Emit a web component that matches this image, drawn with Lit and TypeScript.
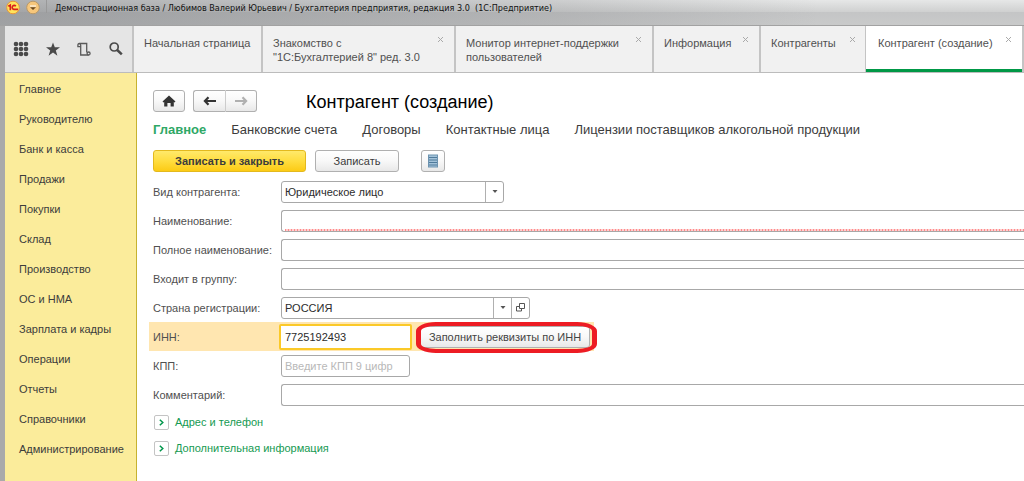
import { LitElement, html, css, svg } from "lit";
import { customElement } from "lit/decorators.js";
import { classMap } from "lit/directives/class-map.js";

const MENU = [
  "Главное", "Руководителю", "Банк и касса", "Продажи", "Покупки", "Склад",
  "Производство", "ОС и НМА", "Зарплата и кадры", "Операции", "Отчеты",
  "Справочники", "Администрирование",
];

const TABS = [
  { text: "Начальная страница", close: false, active: false },
  { text: "Знакомство с\n\"1С:Бухгалтерией 8\" ред. 3.0", close: true, active: false },
  { text: "Монитор интернет-поддержки\nпользователей", close: true, active: false },
  { text: "Информация", close: true, active: false },
  { text: "Контрагенты", close: true, active: false },
  { text: "Контрагент (создание)", close: true, active: true },
];

const SECTIONS = [
  "Главное", "Банковские счета", "Договоры", "Контактные лица",
  "Лицензии поставщиков алкогольной продукции",
];

const gridIcon = html`<svg width="16" height="16" viewBox="0 0 16 16" fill="#4a4a4a">
  ${[3, 8, 13].map((y) => [3, 8, 13].map((x) => svg`<circle cx=${x} cy=${y} r="2.3"/>`))}
</svg>`;
const starIcon = html`<svg width="16" height="16" viewBox="0 0 16 16"><path fill="#4a4a4a" d="M8 1.500l1.800 4.800h5.200l-4.200 3.200 1.600 5.200L8 11.600l-4.400 3.100 1.600-5.200L1 6.300h5.200z"/></svg>`;
const scrollIcon = html`<svg width="16" height="16" viewBox="0 0 16 16" fill="none" stroke="#5a5a5a" stroke-width="1.300"><path d="M4.700 5.700H1.900V4Q1.900 2.500 3.300 2.500H10.700V11.500M3.300 2.500Q4.700 2.700 4.700 4.200V14H12.600M4.700 14L4.700 12"/><circle cx="12.600" cy="12.500" r="1.500"/></svg>`;
const searchIcon = html`<svg width="16" height="16" viewBox="0 0 16 16" fill="none" stroke="#4a4a4a"><circle cx="6.200" cy="6" r="4" stroke-width="1.700"/><path d="M9.200 9L13.800 13.400" stroke-width="2.500"/></svg>`;
const homeIcon = html`<svg width="14" height="12" viewBox="0 0 14 12"><path fill="#333" d="M7 .5L13.500 6.500 12.500 7.500 11.800 6.900V11.500H8.600V8H5.400V11.500H2.200V6.900L1.500 7.500.5 6.500z"/></svg>`;
const arrow = (color: string, back: boolean) => html`<svg width="14" height="10" viewBox="0 0 14 10"><path fill="none" stroke=${color} stroke-width="2.200" d=${back ? "M13 5H2.500M5.500 1.200L1.900 5l3.600 3.800" : "M1 5h10.500M8.500 1.200l3.600 3.800-3.600 3.800"}/></svg>`;
const listIcon = html`<svg width="10" height="14" viewBox="0 0 10 14"><rect x=".5" y="1" width="9" height="12" fill="#a3c2d9" stroke="#6d93b0"/><path d="M1 3.500h8M1 6h8M1 8.500h8M1 11h8" stroke="#4f7a9a"/></svg>`;
const caret = html`<svg width="6" height="4" viewBox="0 0 6 4"><path fill="#555" d="M.5 0h5L3 3z"/></svg>`;
const openIcon = html`<svg width="9" height="9" viewBox="0 0 9 9" fill="none" stroke="#555"><path d="M3.500 .5h5v5h-5zM3 3.500H.5v4.500h5V6"/></svg>`;
const chevron = html`<svg width="5" height="7" viewBox="0 0 5 7"><path fill="none" stroke="#00964b" stroke-width="1.500" d="M.8 .8L3.800 3.500.8 6.200"/></svg>`;

@customElement("app-root")
export class AppRoot extends LitElement {
  static styles = css`
    :host {
      display: flex;
      flex-direction: column;
      min-height: 100vh;
      box-sizing: border-box;
      overflow: hidden;
      background: #fff;
      color: #3c3c3c;
      font: 11px/14px "Liberation Sans", Arial, sans-serif;
    }
    *, *::before, *::after { box-sizing: border-box; }
    svg { display: block; flex: none; }
    button, input, select { font: inherit; color: inherit; margin: 0; padding: 0; }
    a { color: inherit; text-decoration: none; }

    .titlebar {
      display: flex;
      align-items: flex-start;
      height: 26px;
      padding-left: 6px;
      background:
        linear-gradient(90deg, rgba(110, 112, 116, 0.45), rgba(110, 112, 116, 0.2) 55%, rgba(110, 112, 116, 0) 80%),
        linear-gradient(#e6e7e7, #cfd0d0 12px, #c4c5c6 12px, #c9caca);
      border-bottom: 1px solid #a2a2a2;
    }
    .title { padding: 1px 0 0 8px; font-family: "DejaVu Sans Condensed", "Liberation Sans", sans-serif; font-size: 9px; color: #111; white-space: pre; }
    .round { border: 0; background: none; width: 14px; height: 15px; margin-right: 6px; }
    .sep { width: 1px; height: 13px; background: #999; }

    .frame { display: flex; flex-direction: column; flex: 1; border-left: 5px solid #aaa; }
    .top { display: flex; height: 47px; border-bottom: 1px solid #bcbcbc; background: #f1f1f1; }
    .tools { display: flex; align-items: center; justify-content: space-between; width: 127px; padding: 0 8px; background: #e5e5e5; }
    .tool { display: grid; place-items: center; width: 16px; height: 24px; border: 0; background: none; }
    .tabs {
      display: grid;
      grid-template-columns: 129fr 193fr 198fr 107fr 107fr 156fr;
      flex: 1;
      min-width: 0;
      border-right: 2px solid #c4c4c4;
    }
    .tab {
      display: flex;
      min-width: 0;
      border-left: 2px solid #c4c4c4;
      padding: 10px 10px 0 10px;
      color: #505050;
    }
    .tab.active { background: #fff; border-bottom: 3px solid #009846; border-left: 0; padding-left: 12px; box-shadow: -1px 0 #c4c4c4; }
    .tab-text { flex: 1; border: 0; background: none; padding: 0; text-align: left; align-self: flex-start; white-space: pre; }
    .close { border: 0; background: none; width: 7px; height: 7px; }

    .body { display: flex; flex: 1; }
    .menu { width: 132px; flex: none; background: #fbec9b; border-right: 1px solid #c6b230; padding-top: 1px; }
    .menu a { display: flex; align-items: center; height: 30px; padding-left: 14px; white-space: nowrap; }

    main { flex: 1; min-width: 0; padding: 17px 0 0 12px; }
    .head { display: flex; align-items: center; height: 22px; padding-left: 4px; }
    h1 { font-size: 18px; line-height: 22px; font-weight: 400; color: #000; margin: 2px 0 0 49px; }
    .btn {
      display: inline-flex;
      align-items: center;
      justify-content: center;
      height: 22px;
      border: 1px solid #b0b0b0;
      border-radius: 3px;
      background: linear-gradient(#fff, #f8f8f8 50%, #e8e8e8);
    }
    .home { width: 32px; margin-right: 8px; }
    .back { width: 33px; border-radius: 3px 0 0 3px; border-right-color: #ccc; }
    .forward { width: 31px; border-radius: 0 3px 3px 0; border-left: 0; }
    .sections { display: flex; gap: 25px; padding: 9px 0 0 4px; font-size: 13px; line-height: 18px; white-space: nowrap; }
    .sections .current { color: #2fa866; font-weight: 700; }
    .commands { display: flex; padding: 11px 0 5px 4px; }
    .save { width: 153px; margin-right: 9px; font-weight: 700; border-color: #e3b91e; background: linear-gradient(#ffe96b, #ffdd3f 50%, #fccb15); }
    .write { width: 84px; margin-right: 22px; }
    .list { width: 24px; }

    .row { display: flex; align-items: center; height: 29px; padding-left: 4px; color: #505050; }
    .row label { width: 128px; flex: none; }
    .row.hot { width: 445px; background: #ffe6b0; }
    .field { height: 22px; border: 1px solid #a8a8a8; border-radius: 3px; background: #fff; color: #2c2c2c; padding: 0 3px; min-width: 0; }
    .wide { flex: 1; border-right: 0; border-radius: 3px 0 0 3px; }
    .required {
      background: repeating-linear-gradient(90deg, #ff8a8a 0 1px, #ffd0d0 1px 3px) 3px 100% / 100% 2px no-repeat #fff;
    }
    .combo { display: flex; padding: 0; }
    .combo select, .combo input { flex: 1; min-width: 0; border: 0; outline: 0; background: none; padding: 0 3px; appearance: none; }
    .combo .side { display: grid; place-items: center; width: 18px; border: 0; border-left: 1px solid #b0b0b0; background: none; }
    .kind { width: 223px; }
    .country { width: 249px; }
    .inn { width: 133px; height: 26px; margin-left: -2px; border: 2px solid #fbc928; border-radius: 2px; padding: 0 4px; outline: 0; }
    .kpp { width: 129px; }
    .kpp::placeholder { color: #b8b8b8; opacity: 1; }
    .fill-wrap { position: relative; display: flex; margin-left: 8px; }
    .fill { width: 170px; color: #444; }
    .mark { position: absolute; left: -4px; top: -4px; width: 181px; height: 31px; border: 5px solid #ed1c24; border-width: 4px 5px; border-radius: 20px / 9px; pointer-events: none; }

    .group { display: flex; align-items: center; height: 26px; padding: 0 0 0 5px; border: 0; background: none; color: #159a52; }
    .box { display: grid; place-items: center; width: 15px; height: 15px; margin-right: 6px; border: 1px solid #c4c4c4; border-radius: 2px; }
  `;

  render() {
    return html`
      <header class="titlebar">
        <button class="round" aria-label="1С">
          <svg width="14" height="15" viewBox="0 0 14 15"><circle cx="7" cy="7.500" r="6.300" fill="#ffe45c" stroke="#e9963a"/><path d="M2.300 6.300L4.300 5.200V10.200M9.800 6.200A2 2 0 1 0 8.300 9.400H12" fill="none" stroke="#d9201c" stroke-width="1.600"/></svg>
        </button>
        <button class="round" aria-label="Меню">
          <svg width="14" height="15" viewBox="0 0 14 15"><circle cx="7" cy="7.500" r="6.300" fill="#f7c77b" stroke="#b9996a"/><path d="M4 7.200h6L7 10z" fill="#6b4a20"/><path d="M4 6h6" stroke="#fff"/></svg>
        </button>
        <span class="sep"></span>
        <span class="title">Демонстрационная база / Любимов Валерий Юрьевич / Бухгалтерия предприятия, редакция 3.0  (1С:Предприятие)</span>
      </header>
      <div class="frame">
        <div class="top">
          <div class="tools">
            <button class="tool" aria-label="Разделы">${gridIcon}</button>
            <button class="tool" aria-label="Избранное">${starIcon}</button>
            <button class="tool" aria-label="История">${scrollIcon}</button>
            <button class="tool" aria-label="Поиск">${searchIcon}</button>
          </div>
          <nav class="tabs">
            ${TABS.map((t) => html`
              <div class=${classMap({ tab: true, active: t.active })}>
                <button class="tab-text">${t.text}</button>
                ${t.close ? html`<button class="close" aria-label="Закрыть"><svg width="7" height="7" viewBox="0 0 7 7"><path d="M1 1l5 5M6 1L1 6" stroke="#aaa"/></svg></button>` : null}
              </div>`)}
          </nav>
        </div>
        <div class="body">
          <nav class="menu">${MENU.map((m) => html`<a href="#">${m}</a>`)}</nav>
          <main>
            <div class="head">
              <button class="btn home" aria-label="Домой">${homeIcon}</button>
              <button class="btn back" aria-label="Назад">${arrow("#333", true)}</button>
              <button class="btn forward" aria-label="Вперед">${arrow("#b0b0b0", false)}</button>
              <h1>Контрагент (создание)</h1>
            </div>
            <nav class="sections">
              ${SECTIONS.map((s, i) => html`<a href="#" class=${classMap({ current: i === 0 })}>${s}</a>`)}
            </nav>
            <div class="commands">
              <button class="btn save">Записать и закрыть</button>
              <button class="btn write">Записать</button>
              <button class="btn list" aria-label="Список">${listIcon}</button>
            </div>
            <div class="row">
              <label for="kind">Вид контрагента:</label>
              <div class="field combo kind">
                <select id="kind"><option>Юридическое лицо</option></select>
                <button class="side" aria-label="Выбрать вид">${caret}</button>
              </div>
            </div>
            <div class="row">
              <label for="name">Наименование:</label>
              <input id="name" class="field wide required" />
            </div>
            <div class="row">
              <label for="full">Полное наименование:</label>
              <input id="full" class="field wide" />
            </div>
            <div class="row">
              <label for="group">Входит в группу:</label>
              <input id="group" class="field wide" />
            </div>
            <div class="row">
              <label for="country">Страна регистрации:</label>
              <div class="field combo country">
                <input id="country" value="РОССИЯ" />
                <button class="side" aria-label="Выбрать страну">${caret}</button>
                <button class="side" aria-label="Открыть">${openIcon}</button>
              </div>
            </div>
            <div class="row hot">
              <label for="inn">ИНН:</label>
              <input id="inn" class="field inn" value="7725192493" />
              <div class="fill-wrap">
                <button class="btn fill">Заполнить реквизиты по ИНН</button>
                <span class="mark"></span>
              </div>
            </div>
            <div class="row">
              <label for="kpp">КПП:</label>
              <input id="kpp" class="field kpp" placeholder="Введите КПП 9 цифр" />
            </div>
            <div class="row">
              <label for="comment">Комментарий:</label>
              <input id="comment" class="field wide" />
            </div>
            <button class="group"><span class="box">${chevron}</span>Адрес и телефон</button>
            <button class="group"><span class="box">${chevron}</span>Дополнительная информация</button>
          </main>
        </div>
      </div>
    `;
  }
}
